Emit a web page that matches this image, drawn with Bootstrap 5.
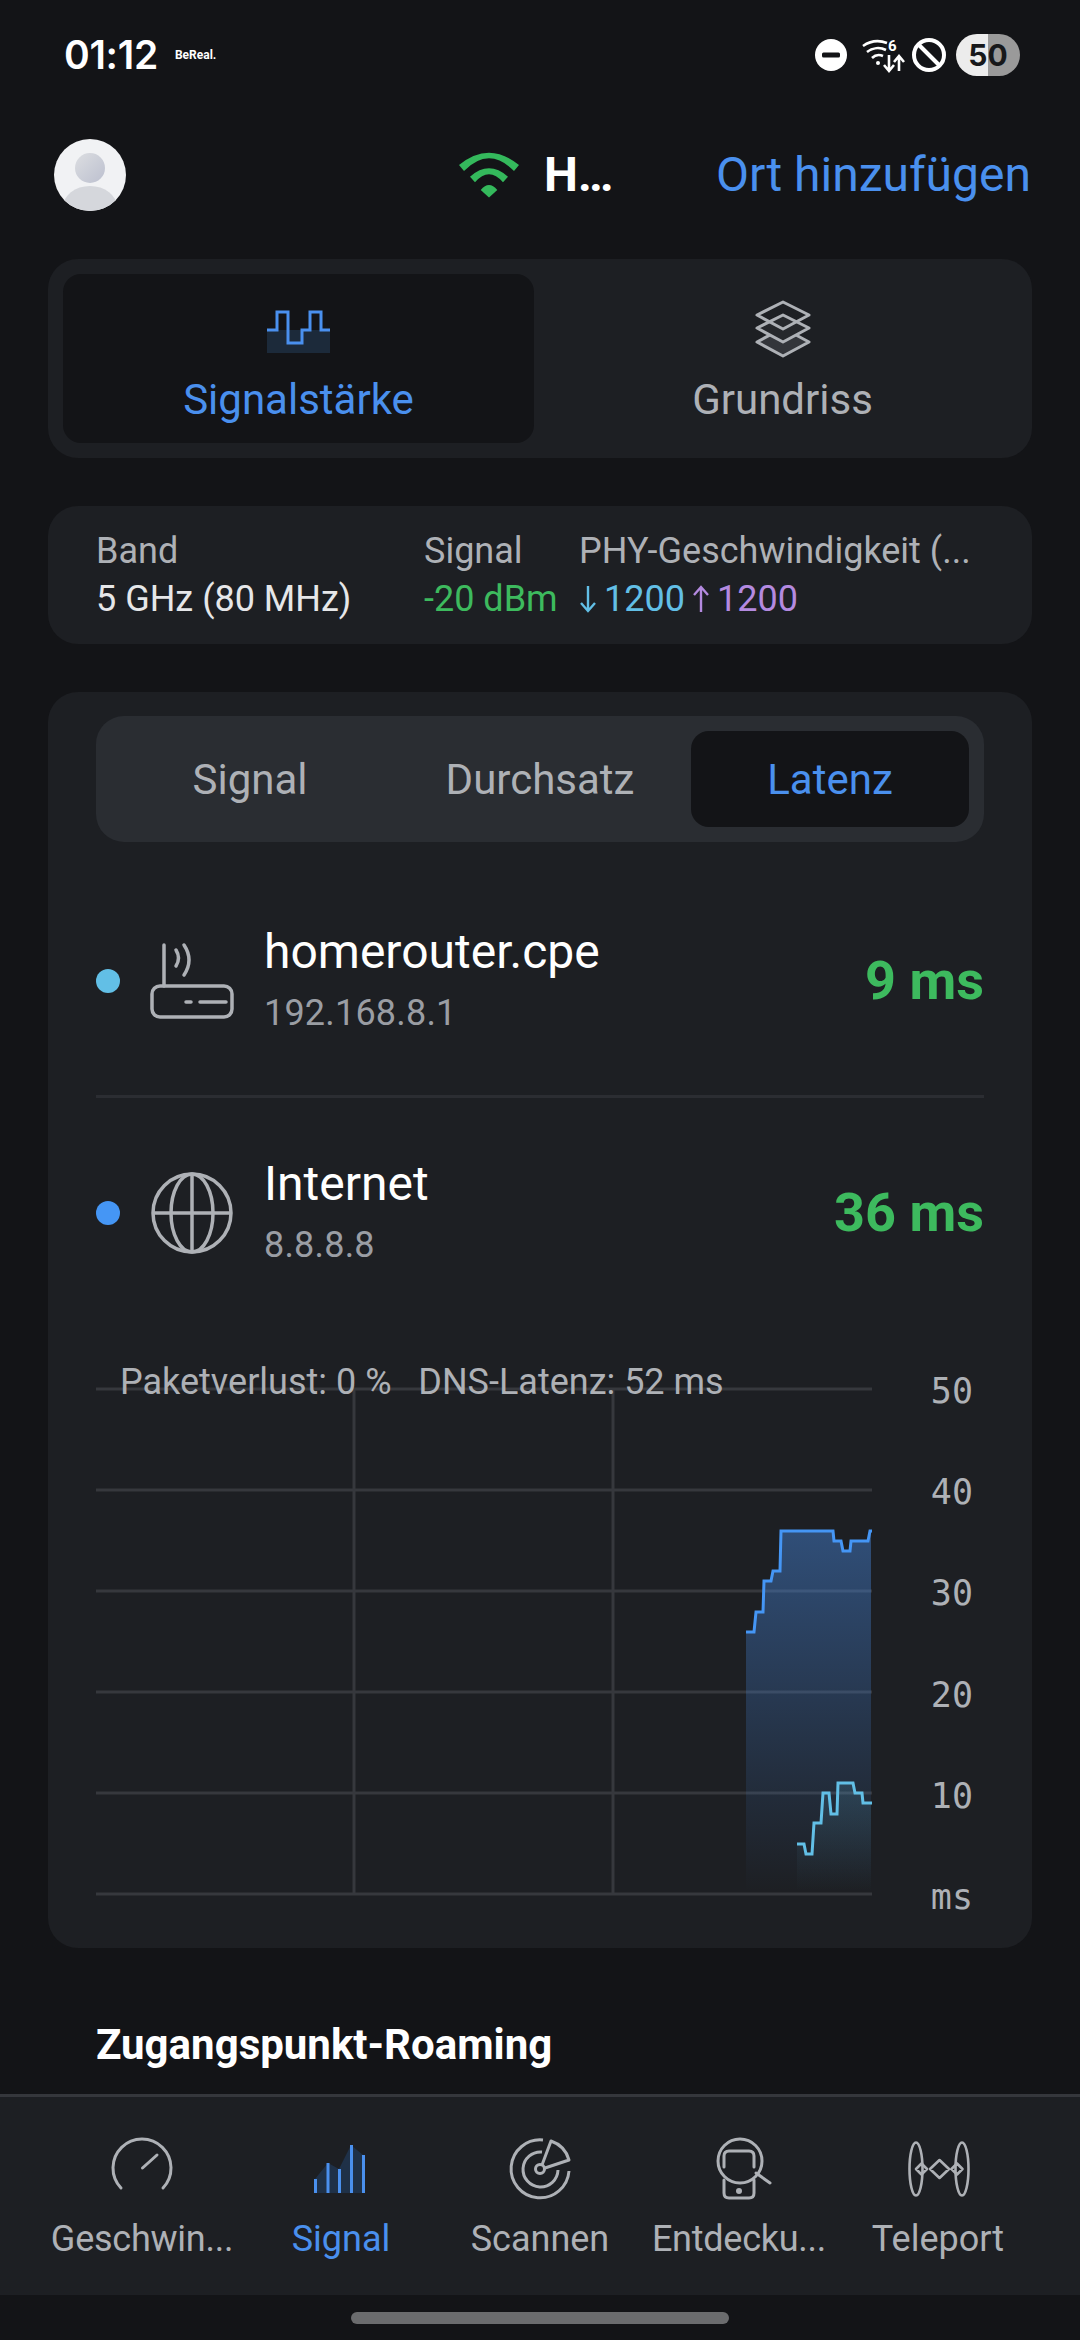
<!DOCTYPE html>
<html lang="de">
<head>
  <meta charset="UTF-8">
  <meta name="viewport" content="width=device-width, initial-scale=1.0">
  <title>Signal</title>
  <link href="https://cdn.jsdelivr.net/npm/bootstrap@5.3.0/dist/css/bootstrap.min.css" rel="stylesheet">
  <style>
    body {
      font-family: Roboto, "Liberation Sans", sans-serif;
      background-color: #131417;
      color: #aeb1b6;
      width: 1080px;
      height: 2340px;
      overflow: hidden;
    }
    svg { display: block; flex-shrink: 0; overflow: visible; }
    .app-shell { height: 2340px; }
    .status-row { height: 110px; padding: 0 60px 0 64px; }
    .clock { font-family: Inter, Roboto, sans-serif; font-size: 39px; font-weight: 600; color: #fff; letter-spacing: -.3px; }
    .tiny-app { font-size: 12px; font-weight: 700; color: #fff; margin-left: 17px; }
    .stat-minus { margin-right: 15px; }
    .stat-wifi { margin-right: 8px; }
    .stat-ban { margin-right: 10px; }
    .battery-pill {
      width: 64px; height: 42px; border-radius: 21px;
      background: linear-gradient(90deg, #ececec 0 50%, #9a9a9a 50% 100%);
      color: #17181a; font-family: Inter, Roboto, sans-serif; font-size: 30px; font-weight: 700;
    }
    .top-row { height: 130px; padding: 0 49px 0 54px; }
    .avatar-disc { width: 72px; height: 72px; border-radius: 50%; overflow: hidden; }
    .net-name { font-size: 48px; font-weight: 700; color: #fff; margin-left: 25px; width: 172px; }
    .add-place { font-size: 48px; color: #4a90ee; }
    .panel { background-color: #1d1f23; border-radius: 30px; margin: 0 48px; }
    .mode-panel { height: 199px; margin-top: 19px; padding: 15px; }
    .mode-tab { flex: 1 1 0; font-size: 42px; line-height: 63px; border-radius: 18px; padding-top: 27px; }
    .mode-tab.is-on { background-color: #131417; color: #4a90ee; flex: 0 0 471px; }
    .mode-other { padding-left: 14px; }
    .icon-steps { margin: 10px 0 15px; }
    .icon-layers { margin-bottom: 11px; }
    .info-panel { height: 138px; margin-top: 48px; padding: 21px 0 0 48px; font-size: 36px; line-height: 48px; }
    .info-band { width: 328px; }
    .info-sig { width: 155px; }
    .val-main { color: #e6e7e9; }
    .val-green { color: #3dba5e; }
    .val-down { color: #62bfe6; }
    .val-up { color: #b48ae0; }
    .arrow-mark { margin-right: 7px; }
    .up-mark { margin-left: 7px; }
    .chart-panel { height: 1256px; margin-top: 48px; padding: 24px 48px 0; }
    .sub-tabs { height: 126px; background-color: #2a2d32; border-radius: 28px; padding: 15px; gap: 12px; font-size: 42px; }
    .sub-tab { flex: 1 1 0; border-radius: 18px; }
    .sub-tab.is-on { background-color: #131417; color: #4a90ee; }
    .host-first { height: 253px; padding-top: 24px; }
    .host-next { height: 232px; border-top: 3px solid #2b2d32; }
    .host-dot { width: 24px; height: 24px; border-radius: 50%; margin-right: 30px; }
    .host-icon { margin-right: 26px; }
    .host-name { font-size: 48px; color: #fff; line-height: 62px; }
    .host-ip { font-size: 36px; color: #9a9da3; line-height: 54px; letter-spacing: .2px; margin-top: 3px; }
    .host-ms { font-size: 54px; font-weight: 700; color: #3dba5e; }
    .chart-wrap { margin-top: 59px; }
    .chart-note { position: absolute; left: 24px; top: -24px; font-size: 36px; color: #aeb1b6; white-space: pre; line-height: 40px; }
    .axis-col { width: 112px; height: 546px; margin-top: -15px; font-family: "DejaVu Sans Mono", monospace; font-size: 35px; line-height: 40px; color: #aeb1b6; text-align: right; padding-right: 11px; }
    .roam-title { font-size: 42px; font-weight: 700; color: #fff; margin: 65px 0 0 96px; }
    .tab-bar { height: 201px; background-color: #1d1f23; border-top: 3px solid #35373c; padding: 0 42.5px; margin-top: auto; }
    .tab-item { width: 199px; padding-top: 41px; font-size: 36px; white-space: nowrap; }
    .tab-item svg { margin-bottom: 14px; }
    .tab-item.is-on { color: #4a90ee; }
    .tab-short { letter-spacing: -.25px; }
    .home-zone { height: 45px; }
    .home-handle { width: 378px; height: 12px; border-radius: 6px; background-color: #6b6c6e; margin-top: 17px; }
  </style>
</head>
<body>
  <div class="app-shell d-flex flex-column">

    <div class="status-row d-flex align-items-center">
      <span class="clock">01:12</span>
      <span class="tiny-app">BeReal.</span>
      <div class="d-flex align-items-center ms-auto">
        <svg class="stat-minus" width="32" height="32" viewBox="0 0 32 32"><circle cx="16" cy="16" r="16" fill="#fff"/><rect x="7" y="13.5" width="18" height="5" rx="1.5" fill="#131417"/></svg>
        <svg class="stat-wifi" width="42" height="34" viewBox="0 0 42 34" fill="none" stroke="#fff" stroke-width="2.6">
          <path d="M1 8 A26 26 0 0 1 25 5"/><path d="M5 14 A18 18 0 0 1 24 12"/><path d="M10 20 A10 10 0 0 1 21 18"/>
          <circle cx="16" cy="25" r="2" fill="#fff" stroke="none"/>
          <text x="26" y="13" font-size="15" font-weight="700" fill="#fff" stroke="none" font-family="Roboto, sans-serif">6</text>
          <path d="M27 17 V32 M22 27 L27 33 L32 27 M37 33 V19 M32 24 L37 18 L42 24"/>
        </svg>
        <svg class="stat-ban" width="34" height="34" viewBox="0 0 34 34" fill="none" stroke="#fff" stroke-width="4"><circle cx="17" cy="17" r="15"/><path d="M6.5 6.5 L27.5 27.5"/></svg>
        <div class="battery-pill d-flex align-items-center justify-content-center">50</div>
      </div>
    </div>

    <div class="top-row d-flex align-items-center">
      <div class="avatar-disc">
        <svg width="72" height="72" viewBox="0 0 72 72">
          <defs>
            <linearGradient id="avHead" x1="0" y1="0" x2="1" y2="1"><stop offset="0" stop-color="#dcdee1"/><stop offset="1" stop-color="#bcc0cf"/></linearGradient>
          </defs>
          <rect width="72" height="72" fill="#f1f2f4"/>
          <circle cx="36" cy="29" r="15" fill="url(#avHead)"/>
          <ellipse cx="36" cy="68" rx="27" ry="21" fill="#d5d7dc"/>
        </svg>
      </div>
      <div class="d-flex align-items-center ms-auto">
        <svg width="60" height="46" viewBox="0 0 60 46" fill="#34b95c">
          <path d="M0 13 Q30 -11.6 60 13 L55 19 Q30 -6.4 5 19 Z"/>
          <path d="M11 24.7 Q30 7.9 49 24.7 L44 30.3 Q30 14.3 16 30.3 Z"/>
          <path d="M21.7 38 Q30 28 38.3 38 L30 45.5 Z"/>
        </svg>
        <span class="net-name">H…</span>
        <span class="add-place">Ort hinzufügen</span>
      </div>
    </div>

    <div class="panel mode-panel d-flex">
      <div class="mode-tab is-on d-flex flex-column align-items-center">
        <svg class="icon-steps" width="64" height="42" viewBox="0 0 64 42">
          <rect x="0" y="19" width="63" height="23" fill="#1c2a3a"/>
          <path d="M0 19 H10 V1 H21 V32 H35 V19 H43 V1 H54 V19 H63" fill="none" stroke="#4a90ee" stroke-width="3"/>
        </svg>
        <span>Signalstärke</span>
      </div>
      <div class="mode-tab mode-other d-flex flex-column align-items-center">
        <svg class="icon-layers" width="56" height="56" viewBox="0 0 56 56" fill="none" stroke="#aeb1b6" stroke-width="3" stroke-linejoin="round">
          <path d="M28 27 L54 41 L28 55 L2 41 Z" fill="#33353a"/>
          <path d="M28 14 L54 27 L28 41 L2 27 Z" fill="#26282c"/>
          <path d="M28 1 L54 14 L28 28 L2 14 Z"/>
        </svg>
        <span>Grundriss</span>
      </div>
    </div>

    <div class="panel info-panel d-flex">
      <div class="info-band"><div>Band</div><div class="val-main">5 GHz (80 MHz)</div></div>
      <div class="info-sig"><div>Signal</div><div class="val-green">-20 dBm</div></div>
      <div class="flex-grow-1">
        <div>PHY-Geschwindigkeit (...</div>
        <div class="d-flex align-items-center">
          <svg class="arrow-mark" width="18" height="28" viewBox="0 0 18 28" fill="none" stroke="#62bfe6" stroke-width="2.4"><path d="M9 1 V26 M2 18 L9 26 L16 18"/></svg>
          <span class="val-down">1200</span>
          <svg class="arrow-mark up-mark" width="18" height="28" viewBox="0 0 18 28" fill="none" stroke="#b48ae0" stroke-width="2.4"><path d="M9 27 V2 M2 10 L9 2 L16 10"/></svg>
          <span class="val-up">1200</span>
        </div>
      </div>
    </div>

    <div class="panel chart-panel">
      <div class="sub-tabs d-flex text-center">
        <div class="sub-tab d-flex align-items-center justify-content-center">Signal</div>
        <div class="sub-tab d-flex align-items-center justify-content-center">Durchsatz</div>
        <div class="sub-tab is-on d-flex align-items-center justify-content-center">Latenz</div>
      </div>

      <div class="host-first d-flex align-items-center">
        <span class="host-dot" style="background-color:#62bfe6"></span>
        <svg class="host-icon" width="88" height="76" viewBox="0 0 88 76" fill="none" stroke="#aeb1b6" stroke-width="3.5" stroke-linecap="round">
          <rect x="2" y="43" width="80" height="31" rx="8"/>
          <path d="M14 43 V2 M26 7 Q31 15 26 23 M34 2 Q44 17 34 32 M36 59 H41 M50 59 H76"/>
        </svg>
        <div>
          <div class="host-name">homerouter.cpe</div>
          <div class="host-ip">192.168.8.1</div>
        </div>
        <span class="host-ms ms-auto">9 ms</span>
      </div>

      <div class="host-next d-flex align-items-center">
        <span class="host-dot" style="background-color:#4596f5"></span>
        <svg class="host-icon" width="88" height="84" viewBox="0 0 88 84" fill="none" stroke="#aeb1b6" stroke-width="3.5">
          <circle cx="42" cy="42" r="39"/><ellipse cx="42" cy="42" rx="21" ry="39"/><path d="M42 3 V81 M3 42 H81"/>
        </svg>
        <div>
          <div class="host-name">Internet</div>
          <div class="host-ip">8.8.8.8</div>
        </div>
        <span class="host-ms ms-auto">36 ms</span>
      </div>

      <div class="chart-wrap d-flex">
        <div class="position-relative">
          <svg width="776" height="512" viewBox="96 1386 776 512">
            <defs>
              <linearGradient id="fillBlue" x1="0" y1="1530" x2="0" y2="1892" gradientUnits="userSpaceOnUse"><stop offset="0" stop-color="#4a90ee" stop-opacity=".42"/><stop offset="1" stop-color="#4a90ee" stop-opacity="0"/></linearGradient>
              <linearGradient id="fillCyan" x1="0" y1="1780" x2="0" y2="1892" gradientUnits="userSpaceOnUse"><stop offset="0" stop-color="#62bfe6" stop-opacity=".16"/><stop offset="1" stop-color="#62bfe6" stop-opacity="0"/></linearGradient>
            </defs>
            <g stroke="#36383d" stroke-width="3" fill="none">
              <path d="M96 1389 H872 M96 1490 H872 M96 1591 H872 M96 1692 H872 M96 1793 H872 M96 1894 H872 M354 1389 V1894 M613 1389 V1894"/>
            </g>
            <path fill="url(#fillBlue)" d="M746 1632 H754 L756 1612 H763 L764 1581 H771 L773 1571 H780 L781 1531 H833 L834 1541 H841 L843 1551 H850 L851 1541 H868 L870 1531 H871 V1892 H746 Z"/>
            <path fill="url(#fillCyan)" d="M797 1844 H804 L806 1854 H812 L814 1823 H821 L823 1793 H829 L831 1814 H837 L838 1783 H853 L855 1793 H862 L863 1803 H871 V1892 H797 Z"/>
            <path fill="none" stroke="#4596f5" stroke-width="3" d="M746 1632 H754 L756 1612 H763 L764 1581 H771 L773 1571 H780 L781 1531 H833 L834 1541 H841 L843 1551 H850 L851 1541 H868 L870 1531 H872"/>
            <path fill="none" stroke="#62bfe6" stroke-width="3" d="M797 1844 H804 L806 1854 H812 L814 1823 H821 L823 1793 H829 L831 1814 H837 L838 1783 H853 L855 1793 H862 L863 1803 H872"/>
          </svg>
          <div class="chart-note">Paketverlust: 0 %   DNS-Latenz: 52 ms</div>
        </div>
        <div class="axis-col d-flex flex-column justify-content-between">
          <span>50</span><span>40</span><span>30</span><span>20</span><span>10</span><span>ms</span>
        </div>
      </div>
    </div>

    <div class="roam-title">Zugangspunkt-Roaming</div>

    <div class="tab-bar d-flex">
      <div class="tab-item d-flex flex-column align-items-center">
        <svg width="60" height="60" viewBox="0 0 60 60" fill="none" stroke="#aeb1b6" stroke-width="3" stroke-linecap="round"><path d="M9 50 A29 29 0 1 1 51 50"/><path d="M30.5 30 L45 17"/></svg>
        <span class="tab-short">Geschwin...</span>
      </div>
      <div class="tab-item is-on d-flex flex-column align-items-center">
        <svg width="60" height="60" viewBox="0 0 60 60">
          <path d="M4 41 L17 25 L28 31 L40 7 L52 17 V55 H4 Z" fill="#1f3148"/>
          <path d="M4.5 41 V55 M17 25 V55 M28.5 31 V55 M40.5 7 V55 M52.5 17 V55" stroke="#4a90ee" stroke-width="3"/>
        </svg>
        <span>Signal</span>
      </div>
      <div class="tab-item d-flex flex-column align-items-center">
        <svg width="60" height="60" viewBox="0 0 60 60" fill="none" stroke="#aeb1b6" stroke-width="3">
          <path d="M33 2 A29 29 0 1 0 59 33"/><path d="M32 14 A17.5 17.5 0 1 0 48 32"/>
          <circle cx="30" cy="31" r="4.5"/><path d="M32 27 L41 3 A28 28 0 0 1 59 22 L35 30" stroke-linejoin="round"/>
        </svg>
        <span>Scannen</span>
      </div>
      <div class="tab-item d-flex flex-column align-items-center">
        <svg width="60" height="60" viewBox="0 0 60 60" fill="none" stroke="#aeb1b6" stroke-width="3" stroke-linecap="round">
          <circle cx="31" cy="23" r="22"/><path d="M47 35 L61 45"/>
          <path d="M15 29 V18 Q15 13 20 13 H40 Q45 13 45 18 V29 M15 42 V55 Q15 60 20 60 H40 Q45 60 45 55 V42"/>
          <circle cx="30" cy="53" r="3" fill="#aeb1b6" stroke="none"/>
        </svg>
        <span class="tab-short">Entdecku...</span>
      </div>
      <div class="tab-item d-flex flex-column align-items-center">
        <svg width="60" height="60" viewBox="0 0 60 60" fill="none" stroke="#aeb1b6" stroke-width="2.6" stroke-linejoin="round">
          <ellipse cx="8" cy="31" rx="6.5" ry="26.5"/><ellipse cx="54" cy="31" rx="6.5" ry="26.5"/>
          <path d="M13.5 25.5 L19 31 L13.5 36.5 L8 31 Z M31.5 22 L41 31 L31.5 40 L22 31 Z M49 25.5 L54.5 31 L49 36.5 L43.5 31 Z"/>
        </svg>
        <span>Teleport</span>
      </div>
    </div>

    <div class="home-zone d-flex justify-content-center">
      <div class="home-handle"></div>
    </div>
  </div>

  <script src="https://cdn.jsdelivr.net/npm/bootstrap@5.3.0/dist/js/bootstrap.bundle.min.js"></script>
</body>
</html>
